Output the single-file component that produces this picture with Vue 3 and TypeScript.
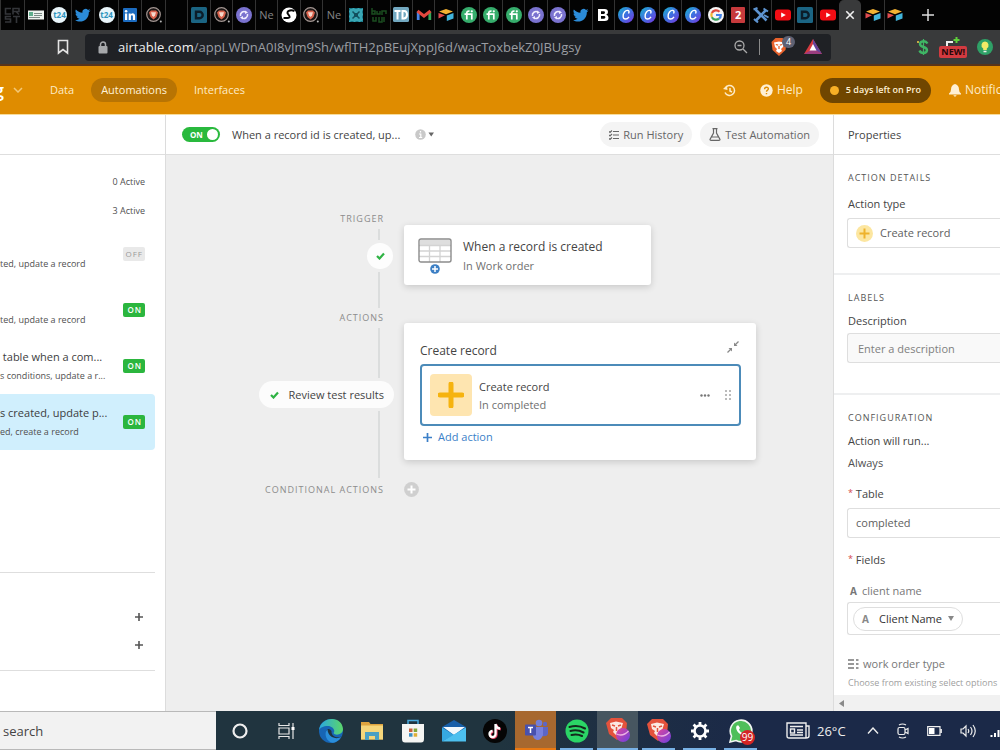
<script setup lang="ts">
import { ref } from 'vue'

interface Tab {
  icon?: string
  text?: string
  badge?: 'round' | 'sheet'
  active?: boolean
}
interface Automation {
  title?: string
  detail: string
  on: boolean
  selected?: boolean
}
interface TaskItem {
  icon: string
  label: string
  state?: 'alert' | 'focus' | 'open'
}

const pinnedTabs: Tab[] = [
  { icon: 'crst' }, { icon: 'doc' }, { text: 't24', badge: 'round' }, { icon: 'bird' },
  { text: 't24', badge: 'round' }, { icon: 'linked' }, { icon: 'lion' },
]
const tabs: Tab[] = [
  {}, { icon: 'dsq' }, { icon: 'lion' }, { icon: 'purple' }, { text: 'Ne' }, { icon: 'swirl' }, { icon: 'lion' },
  { text: 'Ne' }, { icon: 'cyan' }, { icon: 'green' }, { icon: 'td' }, { icon: 'gmail' }, { icon: 'air' },
  { icon: 'fi' }, { icon: 'fi' }, { icon: 'fi' }, { icon: 'purple' }, { icon: 'purple' }, { icon: 'bird' },
  { icon: 'bold' }, { icon: 'canva' }, { icon: 'canva' }, { icon: 'canva' }, { icon: 'canva' }, { icon: 'google' },
  { text: '2', badge: 'sheet' }, { icon: 'cross' }, { icon: 'tube' }, { icon: 'dsq' }, { icon: 'tube' },
  { icon: 'close', active: true }, { icon: 'air' }, { icon: 'air' },
]
const automations: Automation[] = [
  { detail: 'ted, update a record', on: false },
  { detail: 'ted, update a record', on: true },
  { title: ' table when a com...', detail: 's conditions, update a r...', on: true },
  { title: 's created, update p...', detail: 'ed, create a record', on: true, selected: true },
]
const taskItems: TaskItem[] = [
  { icon: 'edge', label: 'Edge' },
  { icon: 'folder', label: 'Files' },
  { icon: 'store', label: 'Store' },
  { icon: 'mail', label: 'Mail' },
  { icon: 'tiktok', label: 'TikTok' },
  { icon: 'teams', label: 'Teams', state: 'alert' },
  { icon: 'spotify', label: 'Spotify', state: 'open' },
  { icon: 'brave', label: 'Brave', state: 'focus' },
  { icon: 'brave', label: 'Brave profile', state: 'open' },
  { icon: 'gear', label: 'Settings', state: 'open' },
  { icon: 'whatsapp', label: 'WhatsApp', state: 'open' },
]
const enabled = ref(true)
const description = ref('')
const search = ref('search')
</script>

<template>
  <svg class="defs" aria-hidden="true">
    <defs>
      <linearGradient id="gCanva" x1="0" y1="0" x2="1" y2="1"><stop offset="0" stop-color="#17b6cf" /><stop offset=".5" stop-color="#3f6fe0" /><stop offset="1" stop-color="#7a34e0" /></linearGradient>
      <linearGradient id="gEdge" x1="0" y1="0" x2="1" y2="0"><stop offset="0" stop-color="#2aa8e0" /><stop offset="1" stop-color="#5bd66a" /></linearGradient>
      <linearGradient id="gBall" x1="0" y1="0" x2="1" y2="1"><stop offset="0" stop-color="#e0479c" /><stop offset="1" stop-color="#6a3fe0" /></linearGradient>
    </defs>
    <symbol id="crst" viewBox="0 0 16 16"><g fill="none" stroke="#34363a" stroke-width="1.6"><path d="M7 1.500H1.500V7H7M9 7.500V1.500H15V4.500H9M12 4.500L15 7.500" /><path d="M7 9.500H1.500V12H6.500V15H1M9 9.500H16M12.500 9.500V16" /></g></symbol>
    <symbol id="doc" viewBox="0 0 16 16"><path d="M0 3.500H16V12.500H0Z" fill="#eef3ef" /><path d="M1 5H5V9H1Z" fill="#5fae8c" /><path d="M6 6.500H14M6 8.500H14M1 10.500H12" stroke="#7b8a86" /></symbol>
    <symbol id="bird" viewBox="0 0 16 16"><path d="M15.500 3.400c-.6.300-1.200.5-1.900.5.700-.4 1.200-1 1.400-1.800-.6.400-1.300.6-2 .8A3.200 3.200 0 0 0 7.500 5.800C4.900 5.700 2.500 4.400.9 2.500c-.9 1.500-.4 3.400 1 4.300-.5 0-1-.2-1.400-.4 0 1.500 1.100 2.900 2.600 3.200-.5.100-1 .1-1.500 0 .4 1.300 1.600 2.200 3 2.200A6.500 6.500 0 0 1 0 13.200c5.500 3.400 13.900.6 13.900-8.200.6-.4 1.200-1 1.600-1.600Z" fill="#2b8bd8" /></symbol>
    <symbol id="linked" viewBox="0 0 16 16"><rect x="1" y="1" width="14" height="14" rx="1" fill="#1c6cc0" /><path d="M3 6.500H5.200V13H3Z M6.700 6.500h2v.9c1.100-1.700 4.400-1.500 4.400 1.700V13h-2.200V9.700c0-2-2-1.900-2 0V13H6.700Z" fill="#fff" /><circle cx="4.100" cy="4.200" r="1.300" fill="#fff" /></symbol>
    <symbol id="lion" viewBox="0 0 16 16"><circle cx="7.500" cy="7.500" r="6.800" fill="#1b1514" stroke="#a39692" stroke-width="1.200" /><path d="M5 3.500H10L12 5.500L10.500 10L7.500 12.500L4.500 10L3 5.500Z" fill="#d9624c" /><path d="M5 5.200H10L9 8.500L7.500 10L6 8.500Z" fill="#f5d8cc" /><circle cx="14.800" cy="14.500" r="1" fill="#bbb" /></symbol>
    <symbol id="dsq" viewBox="0 0 16 16"><rect width="16" height="16" rx="1.500" fill="#1b6583" /><path d="M5 4.800H8.500A3.200 3.200 0 0 1 8.500 11.200H5Z" fill="none" stroke="#0b1d2a" stroke-width="2.400" /></symbol>
    <symbol id="purple" viewBox="0 0 16 16"><circle cx="8" cy="8" r="8" fill="#7a72cf" /><path d="M4.500 9A3.600 3.600 0 0 1 10 5.200M11.500 7A3.600 3.600 0 0 1 6 10.800" fill="none" stroke="#f1eefe" stroke-width="1.600" /><path d="M9 3.500L12 5.500L9 7ZM7 12.500L4 10.500L7 9Z" fill="#f1eefe" /></symbol>
    <symbol id="swirl" viewBox="0 0 16 16"><circle cx="8" cy="8" r="7.500" fill="#fff" /><path d="M13.500 4C9 2 5 4.500 7 7S11 11.500 2.500 11" fill="none" stroke="#050505" stroke-width="2" /></symbol>
    <symbol id="cyan" viewBox="0 0 16 16"><rect x="1" y="1" width="14" height="14" fill="#39a7b4" /><path d="M1.500 1.500H14.500V14.500H1.500Z" fill="none" stroke="#187486" stroke-dasharray="3 2" /><path d="M4.500 4.500L11.500 11.500M11.500 4.500L4.500 11.500" stroke="#12505e" stroke-width="1.500" /><rect x="6" y="6" width="4" height="4" fill="#12505e" /></symbol>
    <symbol id="green" viewBox="0 0 16 16"><g fill="none" stroke="#1b4d20" stroke-width="1.500"><path d="M1 1V7H4V4H1M6 4V7H9V4M11 8V4H15V7M2 10V14H5V10M8 10V15H11V10M13 10V15" /></g></symbol>
    <symbol id="td" viewBox="0 0 16 16"><rect width="16" height="15" rx="1.500" fill="#72a8c0" /><path d="M1.500 4H7.500M4.500 4V12.500M9.500 4V11.500H11Q14 11 14 7.800Q14 4 11 4Z" fill="none" stroke="#fff" stroke-width="2" /></symbol>
    <symbol id="gmail" viewBox="0 0 16 16"><path d="M2.200 13V4.500" stroke="#4a85e8" stroke-width="2.800" /><path d="M13.800 13V4.500" stroke="#36a85a" stroke-width="2.800" /><path d="M1.500 4L8 9L14.500 4" fill="none" stroke="#e2483d" stroke-width="3" /></symbol>
    <symbol id="air" viewBox="0 0 16 16"><path d="M1 4.500L8 2L15 4.500L8 7.200Z" fill="#f2b233" /><path d="M8.800 8.500L15.500 6V11.500L8.800 14Z" fill="#42b5dc" /><path d="M.5 6L7 8.200L.5 11.500Z" fill="#e04c4f" /></symbol>
    <symbol id="fi" viewBox="0 0 16 16"><circle cx="8" cy="8" r="8" fill="#36ad6c" /><path d="M3.500 7.200H10.800V12.500M5.800 12.500V6Q5.800 3.900 8.500 4.200" fill="none" stroke="#fff" stroke-width="1.700" /><circle cx="10.800" cy="4.300" r="1.100" fill="#fff" /></symbol>
    <symbol id="bold" viewBox="0 0 16 16"><path fill-rule="evenodd" d="M3 2H9.500Q13 2 13 5Q13 7 11.200 7.700Q13.500 8.300 13.500 10.700Q13.500 14 9.700 14H3ZM6 4.300V6.900H8.700Q10 6.900 10 5.600Q10 4.300 8.700 4.300ZM6 9V11.700H9Q10.400 11.700 10.400 10.300Q10.400 9 9 9Z" fill="#fff" /></symbol>
    <symbol id="canva" viewBox="0 0 16 16"><circle cx="8" cy="8" r="8" fill="url(#gCanva)" /><path d="M10.500 6.500C12.500 3 8.500 2.500 6.500 5C4.500 7.500 4.500 12 7.500 12Q9.500 12 11 9.800" fill="none" stroke="#fff" stroke-width="1.400" /></symbol>
    <symbol id="google" viewBox="0 0 16 16"><circle cx="8" cy="8" r="8" fill="#f6f6f6" /><g fill="none" stroke-width="2.200"><path d="M11.500 4.800A4.800 4.800 0 0 0 3.800 6" stroke="#e04a3d" /><path d="M3.800 6A4.800 4.800 0 0 0 3.900 10.200" stroke="#f2b632" /><path d="M3.900 10.200A4.800 4.800 0 0 0 11 11.700" stroke="#37a45b" /><path d="M11 11.700Q12.900 10.200 12.800 8H8" stroke="#4484e8" /></g></symbol>
    <symbol id="cross" viewBox="0 0 16 16"><path d="M2.500 2.500L8 8L13.500 13.500M13 3L2.500 14" stroke="#5d93cf" stroke-width="2.600" /><path d="M.5 2.500L4.500 1M10.500 1.500L15 4.500M1 12L5 15.500M11 8L15.500 10.500" stroke="#5d93cf" stroke-width="2" /></symbol>
    <symbol id="tube" viewBox="0 0 16 16"><rect x="0" y="2.500" width="16" height="11" rx="3" fill="#f20d14" /><path d="M6.200 5.500L10.800 8L6.200 10.500Z" fill="#fff" /></symbol>
    <symbol id="close" viewBox="0 0 16 16"><path d="M4.300 4.300L11.700 11.700M11.700 4.300L4.300 11.700" stroke="#f1f1f1" stroke-width="1.600" /></symbol>
    <symbol id="shield" viewBox="0 0 16 18"><path d="M4.500 0H11.500L15.500 4L14.500 12L8 18L1.500 12L.5 4Z" fill="#e8622c" /><path d="M3 4.500L8 3.500L13 4.500L12 9L10 11L11 13L8 15L5 13L6 11L4 9Z" fill="#fff" /><path d="M4.800 6.500L7.200 7.200M11.200 6.500L8.800 7.200M8 8V11" stroke="#e8622c" stroke-width="1.300" /></symbol>

    <symbol id="edge" viewBox="0 0 24 24"><circle cx="12" cy="12" r="12" fill="#1765b5" /><path d="M0 11C2-3 23-4 24 10C24 16 16 17 14.500 14C17 11 13 7 9 7C4 7 1 9 0 11Z" fill="url(#gEdge)" /><path d="M9 10C5 13 8 21 15 21C18 21 21 20 22.500 17.500C19 19.500 12 18 12.500 12Q11 9.500 9 10Z" fill="#20343f" /><path d="M8.500 10.500C4 14 8 24 14 23.700C18 23.500 21 20 22 18C17 21 9 18 8.500 10.500Z" fill="#2a8edb" /></symbol>
    <symbol id="folder" viewBox="0 0 24 24"><path d="M1 3H9L10.500 5H23V20.500H1Z" fill="#dea43f" /><path d="M1 6.500H23V20.500H1Z" fill="#f5d67b" /><path d="M5 21V13H19V21H15V17H9V21Z" fill="#4aa0c4" /></symbol>
    <symbol id="store" viewBox="0 0 24 24"><path d="M7 6V1.500H17V6" fill="none" stroke="#48a9dc" stroke-width="1.500" /><path d="M1 5H23V20Q23 23.500 20 23.500H4Q1 23.500 1 20Z" fill="#f5f5f3" /><path d="M8 9.500H11.500V13H8Z" fill="#c8603d" /><path d="M12.700 9.500H16.200V13H12.700Z" fill="#82a73a" /><path d="M8 14.200H11.500V17.700H8Z" fill="#3b8fc4" /><path d="M12.700 14.200H16.200V17.700H12.700Z" fill="#dfaf35" /></symbol>
    <symbol id="mail" viewBox="0 0 24 24"><path d="M0 8L12 1L24 8V22H0Z" fill="#175fa9" /><path d="M1 8H23L12 16Z" fill="#f1f8fc" /><path d="M0 8.500L12 16L0 22.500Z" fill="#36a9e2" /><path d="M24 8.500V22.500H0L12 15.500Z" fill="#4dc0ef" /></symbol>
    <symbol id="tiktok" viewBox="0 0 24 24"><circle cx="12" cy="12" r="12" fill="#050505" /><path d="M12.500 5V15A3 3 0 1 1 9.500 12M12.500 5Q13 9 17 9.500" fill="none" stroke="#e54768" stroke-width="2.600" transform="translate(.8 .7)" /><path d="M12.500 5V15A3 3 0 1 1 9.500 12M12.500 5Q13 9 17 9.500" fill="none" stroke="#fff" stroke-width="2.300" /></symbol>
    <symbol id="teams" viewBox="0 0 24 24"><circle cx="15" cy="5" r="3.300" fill="#757fd6" /><circle cx="21" cy="6" r="2.200" fill="#5d66c4" /><path d="M17 9H24V16Q23 19 18 18Z" fill="#5c66c5" /><path d="M9 9H19V17Q17 22.500 13 22Q9 21 9 17Z" fill="#7780dc" /><rect x="1" y="6.500" width="11" height="11" rx="1" fill="#4851ad" /><path d="M4 9.500H9M6.500 9.500V15" stroke="#fff" stroke-width="1.500" /></symbol>
    <symbol id="spotify" viewBox="0 0 24 24"><circle cx="12" cy="12" r="11.500" fill="#2bd566" /><path d="M4.500 8Q13 5.500 20 9.500M5.500 12Q12 10 18.500 13.500M6.500 16Q12 14.500 17 17" fill="none" stroke="#14291d" stroke-width="2.100" stroke-linecap="round" /></symbol>
    <symbol id="brave" viewBox="0 0 24 24"><path d="M5 0H16L21 5L20 15L11 22L3 16L0 5Z" fill="#e4523c" /><path d="M4 5L10 3.500L17 5L15.500 10L13 12L13 15L10 17L7 14L8 12L5 10Z" fill="#fbe9e2" /><path d="M6 7L9 8M15 7L12 8M10.500 9V13" stroke="#e4523c" stroke-width="1.500" /><circle cx="17" cy="17" r="7" fill="url(#gBall)" /><path d="M10.500 16Q17 19 22.500 13" fill="none" stroke="#edb3e4" stroke-width="1.300" /></symbol>
    <symbol id="gear" viewBox="0 0 24 24"><circle cx="12" cy="12" r="5.500" fill="none" stroke="#fff" stroke-width="2.600" /><path d="M12 3V7M12 17V21M3 12H7M17 12H21M5.600 5.600L8.400 8.400M15.600 15.600L18.400 18.400M18.400 5.600L15.600 8.400M8.400 15.600L5.600 18.400" stroke="#fff" stroke-width="2.800" /></symbol>
    <symbol id="whatsapp" viewBox="0 0 24 24"><path d="M1 23L2.500 17A10.800 10.800 0 1 1 7 21.500Z" fill="#4fbf5a" stroke="#f2f7f2" stroke-width="1.600" /><path d="M8 6.500C5 9 10 17 16 16.500L18 14L15 12.500L13.500 14Q10.500 12.500 10 10.500L11 9L9.500 6.500Z" fill="#fff" /></symbol>
  </svg>

  <div class="screen">
    <nav class="tabs" aria-label="Browser tabs">
      <div class="tabgroup pinned">
        <button v-for="(t, i) in pinnedTabs" :key="i" class="tab" type="button">
          <svg v-if="t.icon"><use :href="'#' + t.icon" /></svg><span v-else :class="t.badge">{{ t.text }}</span>
        </button>
      </div>
      <div class="tabgroup rest">
        <button v-for="(t, i) in tabs" :key="i" class="tab" :class="{ active: t.active }" type="button">
          <svg v-if="t.icon"><use :href="'#' + t.icon" /></svg><span v-else-if="t.text" :class="t.badge">{{ t.text }}</span>
        </button>
      </div>
      <button class="newtab" type="button" aria-label="New tab"><svg viewBox="0 0 16 16"><path d="M8 2V14M2 8H14" stroke="#ddd" stroke-width="1.500" /></svg></button>
    </nav>

    <div class="urlbar">
      <button class="mark" type="button" aria-label="Bookmark"><svg width="12" height="16" viewBox="0 0 12 16"><path d="M1.500 1.500H10.500V14L6 10.500L1.500 14Z" fill="none" stroke="#e4e4e4" stroke-width="1.600" /></svg></button>
      <div class="address">
        <svg width="10" height="13" viewBox="0 0 10 13"><path d="M2.500 6V3.500A2.500 2.500 0 0 1 7.500 3.500V6" fill="none" stroke="#a6a8ab" stroke-width="1.500" /><rect x=".5" y="5" width="9" height="7.500" rx="1" fill="#a6a8ab" /></svg>
        <span class="url"><b>airtable.com</b>/appLWDnA0I8vJm9Sh/wflTH2pBEujXppJ6d/wacToxbekZ0JBUgsy</span>
        <svg class="lens" width="14" height="14" viewBox="0 0 14 14"><g fill="none" stroke="#aaa" stroke-width="1.300"><circle cx="5.500" cy="5.500" r="4.500" /><path d="M9 9L13 13M3.500 5.500H7.500" /></g></svg>
        <i class="bar"></i>
        <span class="shield"><svg width="16" height="18"><use href="#shield" /></svg><em>4</em></span>
        <svg width="18" height="16" viewBox="0 0 18 16"><path d="M9 0L18 15H0Z" fill="#d43a3f" /><path d="M9 0L18 15L9 10Z" fill="#65459c" /><path d="M0 15L9 10L18 15Z" fill="#9a3d80" /><path d="M9 5L12.500 11.500H5.500Z" fill="#fff" /></svg>
      </div>
      <div class="exts">
        <svg width="12" height="18" viewBox="0 0 12 18"><path d="M10.500 5.500Q9 3 6.500 3.200Q3 3.500 3 6Q3 8 6.500 9Q10 10 10 12.200Q9.500 15 6.500 15Q3.500 15 2.500 12.500" fill="none" stroke="#3fb565" stroke-width="2.400" /><path d="M6.500 1V17" stroke="#3fb565" stroke-width="1.200" /><circle cx="1" cy="4" r="1" fill="#f2d049" /></svg>
        <span class="new"><svg width="14" height="9" viewBox="0 0 14 9"><path d="M1 9V5H7" fill="none" stroke="#eee" stroke-width="2" /><path d="M10.500 0V6M7.500 3H13.500" stroke="#5fd03b" stroke-width="2" /></svg><b>NEW!</b></span>
        <svg width="16" height="16" viewBox="0 0 16 16"><circle cx="8" cy="8" r="8" fill="#2fa167" /><path d="M8 2.500A3.800 3.800 0 0 1 9.800 9.500V11H6.200V9.500A3.800 3.800 0 0 1 8 2.500Z" fill="#f2ea66" /><path d="M6.500 12.500H9.500" stroke="#eee" stroke-width="1.500" /></svg>
      </div>
    </div>

    <header class="apphead">
      <strong class="base">g</strong>
      <svg class="chev" width="10" height="6" viewBox="0 0 10 6"><path d="M1 1L5 5L9 1" fill="none" stroke="#f3c878" stroke-width="1.500" /></svg>
      <a href="#data">Data</a>
      <a href="#automations" class="current">Automations</a>
      <a href="#interfaces">Interfaces</a>
      <div class="headright">
        <svg width="13" height="13" viewBox="0 0 13 13"><path d="M2.200 4A5 5 0 1 1 2 8.500M7 4V7L9 8" fill="none" stroke="#fdebc8" stroke-width="1.500" /><path d="M0 5L4.500 6L4 1.500Z" fill="#fdebc8" /></svg>
        <a href="#help" class="help"><svg width="13" height="13" viewBox="0 0 13 13"><circle cx="6.500" cy="6.500" r="6.200" fill="#fff0d4" /><path d="M4.600 5.200C4.600 2.500 8.600 2.700 8.400 5C8.300 6.200 6.500 6.200 6.500 7.700M6.500 9V10.300" fill="none" stroke="#df8c00" stroke-width="1.400" /></svg>Help</a>
        <button class="trial" type="button"><i></i>5 days left on Pro</button>
        <a href="#notifications" class="notes"><svg width="12" height="13" viewBox="0 0 12 13"><path d="M6 0Q10 1 10 5.500Q10 8 12 9.500V10.500H0V9.500Q2 8 2 5.500Q2 1 6 0ZM4.300 11.300H7.700Q6 14 4.300 11.300Z" fill="#fff0d4" /></svg>Notifications</a>
      </div>
    </header>

    <main class="work">
      <aside class="side">
        <div class="sidehead"></div>
        <p class="count">0 Active</p>
        <p class="count">3 Active</p>
        <ul>
          <li v-for="(a, i) in automations" :key="i" :class="{ selected: a.selected }">
            <div class="about"><strong v-if="a.title">{{ a.title }}</strong><span>{{ a.detail }}</span></div>
            <em :class="{ on: a.on }">{{ a.on ? 'ON' : 'OFF' }}</em>
          </li>
        </ul>
        <div class="create">
          <button v-for="n in 2" :key="n" type="button" aria-label="Create"><svg width="8" height="8" viewBox="0 0 8 8"><path d="M4 0V8M0 4H8" stroke="#555" stroke-width="1.600" /></svg></button>
        </div>
      </aside>

      <section class="editor">
        <div class="toolbar">
          <label class="switch"><input v-model="enabled" type="checkbox" aria-label="Automation on" /><span>ON</span></label>
          <h1>When a record id is created, up...</h1>
          <button class="info" type="button" aria-label="Details"><svg width="20" height="11" viewBox="0 0 20 11"><circle cx="5.500" cy="5.500" r="5.300" fill="#c9c9c9" /><path d="M5.500 2V3.500M4 5H5.800V8.500M4 8.500H7.200" fill="none" stroke="#fff" stroke-width="1.200" /><path d="M13.500 3.500H19L16.200 7.500Z" fill="#666" /></svg></button>
          <button class="pill" type="button"><svg width="10" height="10" viewBox="0 0 10 10"><path d="M4 1.500H10M4 5H10M4 8.500H10M0 1.500L1 2.500L3 .5M0 5L1 6L3 4M0 8.500L1 9.500L3 7.500" fill="none" stroke="#666" stroke-width="1.100" /></svg>Run History</button>
          <button class="pill" type="button"><svg width="12" height="13" viewBox="0 0 12 13"><path d="M3.500 .7H8.500M4.500 1V5L1 11.500Q1 12.300 2 12.300H10Q11 12.300 11 11.500L7.500 5V1M3 9H9" fill="none" stroke="#666" stroke-width="1.200" /></svg>Test Automation</button>
        </div>
        <div class="canvas">
          <div class="rail">
            <h2>Trigger</h2><i class="line short"></i>
            <span class="tick"><svg width="9" height="8" viewBox="0 0 9 8"><path d="M1 4L3.500 6.500L8 1.500" fill="none" stroke="#2fb344" stroke-width="2.200" /></svg></span>
            <i class="line"></i>
          </div>
          <article class="card trigger">
            <svg width="34" height="36" viewBox="0 0 34 36"><rect x="1" y="1" width="32" height="23" rx="2" fill="#fff" /><path d="M2 2H32V7H2Z" fill="#dedede" /><path d="M1 7.500H33M1 13H33M1 18.500H33M11.500 7V24M22 7V24" stroke="#d3d3d3" stroke-width="1.300" /><rect x="1" y="1" width="32" height="23" rx="2" fill="none" stroke="#8c8c8c" stroke-width="1.400" /><circle cx="17" cy="31" r="4.800" fill="#3c7fc4" /><path d="M17 28V34M14 31H20" stroke="#fff" stroke-width="1.500" /></svg>
            <div><h3>When a record is created</h3><p>In Work order</p></div>
          </article>

          <div class="rail">
            <h2>Actions</h2><i class="line upper"></i>
            <button class="review" type="button"><svg width="9" height="8" viewBox="0 0 9 8"><path d="M1 4L3.500 6.500L8 1.500" fill="none" stroke="#2fb344" stroke-width="2.200" /></svg>Review test results</button>
            <i class="line lower"></i>
          </div>
          <article class="card actions">
            <div class="cardhead"><h3>Create record</h3>
              <button type="button" aria-label="Collapse"><svg width="12" height="12" viewBox="0 0 12 12"><path d="M11.500 .5L8 4M.5 11.500L4 8" stroke="#888" stroke-width="1.300" /><path d="M7 1.500V5H10.500ZM1.500 7H5V10.500Z" fill="#888" /></svg></button></div>
            <div class="step">
              <span class="plus"><svg width="26" height="26" viewBox="0 0 26 26"><path d="M13 2V24M2 13H24" stroke="#f6b30f" stroke-width="5" stroke-linecap="round" /></svg></span>
              <div><h4>Create record</h4><p>In completed</p></div>
              <button class="more" type="button" aria-label="More"><svg width="10" height="3" viewBox="0 0 10 3"><g fill="#777"><circle cx="1.500" cy="1.500" r="1.200" /><circle cx="5" cy="1.500" r="1.200" /><circle cx="8.500" cy="1.500" r="1.200" /></g></svg></button>
              <button type="button" aria-label="Drag"><svg width="6" height="10" viewBox="0 0 6 10"><path d="M0 1H2M4 1H6M0 5H2M4 5H6M0 9H2M4 9H6" stroke="#bbb" stroke-width="1.800" /></svg></button>
            </div>
            <button class="add" type="button"><svg width="9" height="9" viewBox="0 0 9 9"><path d="M4.500 0V9M0 4.500H9" stroke="#3b7fc8" stroke-width="1.700" /></svg>Add action</button>
          </article>

          <div class="rail"><h2>Conditional actions</h2></div>
          <button class="cond" type="button" aria-label="Add conditional actions"><svg width="15" height="15" viewBox="0 0 15 15"><circle cx="7.500" cy="7.500" r="7.400" fill="#cfcfcf" /><path d="M7.500 3.500V11.500M3.500 7.500H11.500" stroke="#fff" stroke-width="2" /></svg></button>
        </div>
      </section>

      <aside class="props">
        <h2 class="propshead">Properties</h2>
        <div class="propsbody">
          <section class="group first">
            <h3>Action details</h3>
            <span class="label">Action type</span>
            <button class="field type" type="button"><svg width="17" height="17" viewBox="0 0 17 17"><circle cx="8.500" cy="8.500" r="8.500" fill="#fce6a0" /><path d="M8.500 3.500V13.500M3.500 8.500H13.500" stroke="#eeb22b" stroke-width="2" /></svg>Create record</button>
          </section>
          <section class="group second">
            <h3>Labels</h3>
            <label class="label" for="desc">Description</label>
            <input id="desc" v-model="description" class="field" placeholder="Enter a description" />
          </section>
          <section class="group third">
            <h3>Configuration</h3>
            <span class="label">Action will run...</span>
            <p class="always">Always</p>
            <span class="label"><sup>*</sup> Table</span>
            <button class="field table" type="button">completed</button>
            <span class="label"><sup>*</sup> Fields</span>
            <p class="fieldname"><b>A</b>client name</p>
            <div class="field token"><button type="button"><b>A</b>Client Name<svg width="6" height="5" viewBox="0 0 6 5"><path d="M0 0H6L3 5Z" fill="#888" /></svg></button></div>
            <p class="fieldname kind"><svg width="11" height="10" viewBox="0 0 11 10"><path d="M0 1H6M0 5H6M0 9H6M8 1H10.500M8 5H10.500M8 9H10.500" stroke="#777" stroke-width="1.700" /></svg>work order type</p>
            <p class="hint">Choose from existing select options</p>
          </section>
        </div>
        <div class="scroll"><svg width="5" height="7" viewBox="0 0 5 7"><path d="M5 0V7L0 3.500Z" fill="#8a8a8a" /></svg></div>
      </aside>
    </main>

    <footer class="taskbar">
      <input v-model="search" class="search" aria-label="Search" />
      <button class="wide" type="button" aria-label="Cortana"><svg width="16" height="16" viewBox="0 0 16 16"><circle cx="8" cy="8" r="6.500" fill="none" stroke="#eee" stroke-width="2.200" /></svg></button>
      <button class="wide" type="button" aria-label="Task view"><svg width="17" height="16" viewBox="0 0 17 16"><g fill="none" stroke="#e5e5e5" stroke-width="1.200"><path d="M1 0V2.500H11V0M1 16V13.500H11V16M1 5H11V11H1ZM15 0V16" /></g><rect x="13.500" y="4" width="3" height="3" fill="#fff" /></svg></button>
      <button v-for="(t, i) in taskItems" :key="i" class="task" :class="t.state" type="button" :aria-label="t.label">
        <svg width="24" height="24"><use :href="'#' + t.icon" /></svg><span v-if="t.icon === 'whatsapp'" class="unread">99</span>
      </button>
      <div class="tray">
        <svg width="24" height="17" viewBox="0 0 24 17"><g fill="none" stroke="#eee" stroke-width="1.400"><path d="M1 1H20V16H3Q1 16 1 14ZM20 4H23V14Q23 16 20 16M4 4.500H17M11 8H17M11 10.500H17M4 13H17" /><rect x="4.500" y="7" width="4" height="4" /></g></svg>
        <span class="temp">26°C</span>
        <svg width="12" height="7" viewBox="0 0 12 7"><path d="M1 6.500L6 1L11 6.500" fill="none" stroke="#eee" stroke-width="1.400" /></svg>
        <svg width="12" height="16" viewBox="0 0 12 16"><g fill="none" stroke="#eee" stroke-width="1.200"><rect x="1" y="4.500" width="7" height="7" rx="1.500" /><path d="M8 7L11 5.500V10.500L8 9M2 2Q5.500 0 9 2M2 14Q5.500 16 9 14" /></g></svg>
        <svg width="15" height="10" viewBox="0 0 15 10"><path d="M.7 .7H13V9.300H.7ZM14.300 3V7" fill="none" stroke="#eee" stroke-width="1.200" /><path d="M2 2H7.500V8H2Z" fill="#fff" /></svg>
        <svg width="17" height="14" viewBox="0 0 17 14"><path d="M1 5H3L6 2V12L3 9H1ZM8 5Q9.500 7 8 9M10.500 3Q13.500 7 10.500 11M13 1Q17.500 7 13 13" fill="none" stroke="#eee" stroke-width="1.200" /></svg>
        <svg width="13" height="12" viewBox="0 0 13 12"><path d="M1.500 12V10M5 12V8M8.500 12V5M12 12V2" stroke="#fff" stroke-width="2" /></svg>
      </div>
    </footer>
  </div>
</template>

<style>
body { margin: 0; }
</style>

<style scoped>
.defs { position: absolute; width: 0; height: 0; }
.screen { display: flex; flex-direction: column; height: 100vh; overflow: hidden; background: #fff; color: #505050; font: 11px/16px "Open Sans", "Noto Sans", sans-serif; }
.screen * { box-sizing: border-box; }
svg { display: block; flex: none; }
button { padding: 0; border: 0; background: none; color: inherit; font: inherit; text-align: left; }
a { color: inherit; text-decoration: none; }
h1, h2, h3, h4, p, ul { margin: 0; padding: 0; font: inherit; list-style: none; }
em, i { font-style: normal; }

.tabs { display: flex; flex: none; height: 30px; background: #030303; }
.tabgroup { display: flex; min-width: 0; }
.pinned { flex: 0 1 165px; }
.rest { flex: 0 1 741px; }
.tab { display: flex; flex: 1 1 0; align-items: center; justify-content: center; min-width: 0; border-left: 1px solid #333; color: #858585; font-size: 11px; overflow: hidden; }
.tab svg { width: 16px; height: 16px; }
.tab.active { border-color: #393a3b; border-radius: 5px 5px 0 0; background: #393a3b; }
.tab.active + .tab { border-color: #030303; }
.round, .sheet { width: 16px; height: 16px; border-radius: 8px; background: #e9f5fa; color: #2e93bd; font-size: 8px; font-weight: 700; line-height: 15px; text-align: center; }
.sheet { width: 14px; border-radius: 1px; background: #c73a3c; color: #fff; font-size: 11px; }
.newtab { display: flex; align-items: center; margin-left: 14px; }
.newtab svg { width: 16px; height: 16px; }

.urlbar { display: flex; flex: none; align-items: center; height: 36px; border-bottom: 2px solid #5a3418; background: #393a3b; }
.mark { margin: 0 16px 0 57px; }
.address { display: flex; flex: 0 1 746px; align-items: center; height: 27px; padding: 0 9px 0 13px; border-radius: 4px; background: #1f2125; color: #9b9ea3; font-size: 13px; white-space: nowrap; }
.url { flex: 1 1 0; min-width: 0; padding-left: 10px; overflow: hidden; }
.url b { color: #f1f1f1; font-weight: 500; }
.bar { width: 1px; height: 16px; margin: 0 11px; background: #8a8a8a; }
.shield { position: relative; margin-right: 17px; }
.shield em { position: absolute; top: -2px; left: 11px; width: 13px; height: 12px; border-radius: 6px; background: #5e6173; color: #fff; font-size: 9px; line-height: 12px; text-align: center; }
.exts { display: flex; flex: 1 0 auto; align-items: center; justify-content: flex-end; gap: 10px; padding-right: 7px; }
.new { display: flex; flex-direction: column; align-items: center; }
.new b { padding: 0 2px; border-radius: 2px; background: #d33a40; color: #260708; font-size: 9px; line-height: 12px; }

.apphead { display: flex; flex: none; align-items: center; height: 49px; border-bottom: 1px solid #f7dc9b; background: #df8c00; color: #fdebc8; font-size: 12px; overflow: hidden; white-space: nowrap; }
.base { width: 4px; margin-right: 9px; color: #fff; font-size: 18px; font-weight: 600; direction: rtl; overflow: hidden; line-height: 24px; }
.chev { margin-right: 27px; }
.apphead > a { margin-right: 17px; font-size: 11px; }
.apphead > .current { padding: 4px 10px; border-radius: 12px; background: #b87403; color: #fff2d8; font-weight: 500; }
.headright { display: flex; flex: 1 0 auto; align-items: center; justify-content: flex-end; width: 270px; }
.help { display: flex; align-items: center; gap: 4px; margin: 0 17px 0 24px; }
.trial { display: flex; align-items: center; gap: 7px; height: 25px; padding: 0 10px; border-radius: 13px; background: #704600; color: #fff0d4; font-size: 9px; font-weight: 600; }
.trial i { width: 9px; height: 9px; border-radius: 50%; background: #f8b026; }
.notes { display: flex; flex: none; align-items: center; gap: 4px; width: 51px; margin-left: 18px; }

.work { display: flex; flex: 1 1 0; min-height: 0; }
.side { display: flex; flex: 0 0 166px; flex-direction: column; border-right: 1px solid #dcdcdc; white-space: nowrap; }
.sidehead { height: 40px; margin-bottom: 12px; border-bottom: 1px solid #dedede; }
.count { height: 29px; padding-right: 20px; font-size: 9px; line-height: 29px; text-align: right; }
.side ul { margin-top: 1px; }
.side li { display: flex; align-items: center; height: 56px; margin-right: 10px; padding-right: 10px; border-radius: 0 4px 4px 0; }
.side .selected { background: #d0effd; }
.about { display: flex; flex: 1 1 0; flex-direction: column; justify-content: flex-end; height: 56px; padding-bottom: 11px; overflow: hidden; }
.about strong { margin-bottom: 4px; color: #3d3d3d; font-weight: 500; white-space: pre; }
.about span { font-size: 9px; line-height: 14px; }
.side em { padding: 0 2px 0 3px; border-radius: 2px; background: #e9e9e9; color: #999; font-size: 8px; font-weight: 500; line-height: 14px; letter-spacing: 1px; }
.side .on { padding: 0 3px 0 4px; background: #2bb63e; color: #fff; font-weight: 600; }
.create { display: flex; flex-direction: column; align-items: flex-end; gap: 20px; height: 99px; margin-top: 122px; margin-right: 10px; padding: 40px 12px 0; border: solid #dedede; border-width: 1px 0; }

.editor { display: flex; flex: 1 1 0; flex-direction: column; min-width: 0; }
.toolbar { display: flex; flex: none; align-items: center; height: 40px; padding: 0 14px 0 16px; border-bottom: 1px solid #dedede; white-space: nowrap; }
.switch { display: flex; position: relative; align-items: center; width: 38px; height: 15px; margin-right: 12px; padding-left: 8px; border-radius: 8px; background: #29b93d; color: #fff; font-size: 8px; font-weight: 700; }
.switch input { position: absolute; inset: 0; width: 100%; height: 100%; margin: 0; opacity: 0; }
.switch::after { position: absolute; top: 2px; right: 2px; width: 11px; height: 11px; border-radius: 50%; background: #fff; content: ""; }
h1 { color: #444; font-weight: 500; }
.info { margin: 0 auto 0 15px; }
.pill { display: flex; align-items: center; gap: 4px; height: 25px; margin-left: 8px; padding: 0 9px; border-radius: 13px; background: #f4f4f4; color: #666; font-weight: 500; }
.canvas { display: grid; flex: 1 1 0; grid-template-columns: 228px 1fr; grid-template-rows: auto auto auto; align-content: start; column-gap: 10px; padding-top: 57px; background: #eee; }
.rail { display: flex; flex-direction: column; align-items: flex-end; }
.rail h2 { margin-right: 10px; color: #8c8c8c; font-size: 9px; font-weight: 500; line-height: 14px; letter-spacing: 1px; text-transform: uppercase; white-space: nowrap; }
.line { flex: 1 1 0; width: 2px; margin: 3px 14px 3px 0; background: #dbdddd; }
.line.short { flex: 0 0 11px; }
.line.upper { flex-grow: 3; }
.line.lower { flex-grow: 4; }
.tick { display: grid; place-items: center; width: 26px; height: 26px; margin-right: 1px; border-radius: 50%; background: #fdfdfd; }
.review { display: flex; align-items: center; gap: 9px; height: 27px; padding: 0 10px 0 11px; border-radius: 14px; background: #fcfcfc; color: #444; font-weight: 500; }
.card { justify-self: start; border-radius: 3px; background: #fff; box-shadow: 0 2px 7px rgba(0, 0, 0, .16); color: #444; }
.trigger { display: flex; gap: 11px; width: 247px; height: 60px; margin: 13px 0 26px; padding: 13px 14px; }
.trigger h3 { font-size: 12px; font-weight: 500; line-height: 18px; }
.trigger p, .step p { margin-top: 2px; color: #707070; }
.actions { width: 352px; margin: 12px 0 21px; padding: 16px 15px 15px 16px; }
.cardhead { display: flex; justify-content: space-between; margin-bottom: 2px; padding-right: 2px; }
.cardhead h3 { padding-top: 1px; font-size: 12px; font-weight: 500; line-height: 22px; }
.cardhead button { align-self: flex-start; padding-top: 2px; }
.step { display: flex; align-items: center; height: 62px; padding: 0 8px; border: 2px solid #4c8bb9; border-radius: 4px; }
.plus { display: grid; place-items: center; width: 42px; height: 42px; margin-right: 7px; border-radius: 4px; background: #fee5b0; }
.step div { padding-top: 2px; }
.more { margin: 0 15px 0 auto; }
.add { display: flex; align-items: center; gap: 6px; margin-top: 3px; padding-left: 3px; color: #3b7fc8; font-weight: 500; }
.cond { justify-self: start; }
.rail:nth-of-type(3) { padding-top: 2px; }

.props { display: flex; flex: 0 0 167px; flex-direction: column; border-left: 1px solid #dcdcdc; overflow: hidden; white-space: nowrap; }
.propshead { flex: none; height: 40px; padding-left: 14px; border-bottom: 1px solid #dedede; color: #444; font-weight: 500; line-height: 40px; }
.propsbody { flex: 1 1 0; min-height: 0; overflow: hidden; }
.group { display: flex; flex-direction: column; padding: 16px 0 0 13px; border-bottom: 2px solid #eeeff0; }
.first, .second { height: 120px; }
.third { border: 0; }
.group h3 { margin: 0 0 8px 1px; color: #555; font-size: 9px; font-weight: 500; line-height: 14px; letter-spacing: 1px; text-transform: uppercase; }
.first h3 { margin-bottom: 11px; }
.label { margin: 0 0 6px 1px; color: #444; font-weight: 500; }
.field { display: flex; align-items: center; width: 100%; height: 30px; margin: 0; padding: 0 10px 0 8px; border: 1px solid #dedede; border-right: 0; border-radius: 3px 0 0 3px; background: #fff; color: #606060; font: inherit; }
.type { gap: 7px; }
.second .label { margin-bottom: 4px; }
.second .field { padding-left: 10px; background: #f9f9f9; }
.field::placeholder { color: #808080; opacity: 1; }
.always { margin: 0 0 15px 1px; }
.table { margin-bottom: 14px; }
.label sup { color: #d34848; font-size: 9px; line-height: 0; vertical-align: 2px; }
.fieldname { display: flex; align-items: center; margin-top: 9px; padding-left: 3px; color: #777; }
.fieldname b { width: 12px; font-size: 10px; }
.fieldname svg { margin-right: 4px; }
.token { height: 33px; margin-top: 3px; padding-left: 5px; }
.token button { display: flex; align-items: center; height: 24px; padding: 0 8px; border: 1px solid #dedede; border-radius: 12px; color: #333; }
.token b { width: 17px; color: #888; font-size: 10px; }
.token svg { margin-left: 6px; }
.kind { margin-top: 21px; padding-left: 1px; }
.hint { margin: 3px 0 0 1px; color: #a0a0a0; font-size: 9px; }
.scroll { display: flex; flex: none; align-items: center; height: 16px; padding-left: 5px; background: #f1f1f1; }

.taskbar { display: flex; flex: none; height: 39px; background: linear-gradient(90deg, #20343f 50%, #1b2948 75%); color: #eee; overflow: hidden; }
.search { flex: 0 1 216px; min-width: 0; padding: 0 3px; border: solid #b9b9b9; border-width: 1px 0; border-radius: 0; background: #f2f2f2; color: #444; font: 13px/20px "Open Sans", sans-serif; }
.taskbar button { display: grid; position: relative; flex: 0 0 41px; place-items: center; }
.taskbar .wide { flex-basis: 47px; }
.task.alert { border-bottom: 2px solid #e97812; background: #a7682f; }
.task.focus { border-bottom: 2px solid #79b2e6; background: #475660; }
.task.open::after { position: absolute; right: 4px; bottom: 0; left: 4px; height: 2px; background: #79b2e6; content: ""; }
.unread { position: absolute; right: 6px; bottom: 5px; width: 15px; height: 15px; border-radius: 50%; background: #d42525; color: #fff; font-size: 10px; line-height: 15px; text-align: center; }
.tray { display: flex; flex: 1 1 0; align-items: center; gap: 18px; min-width: 0; padding-left: 25px; }
.temp { margin: 0 3px 0 -11px; font-size: 13px; }
.tray svg:last-child { margin-left: -5px; }
</style>
